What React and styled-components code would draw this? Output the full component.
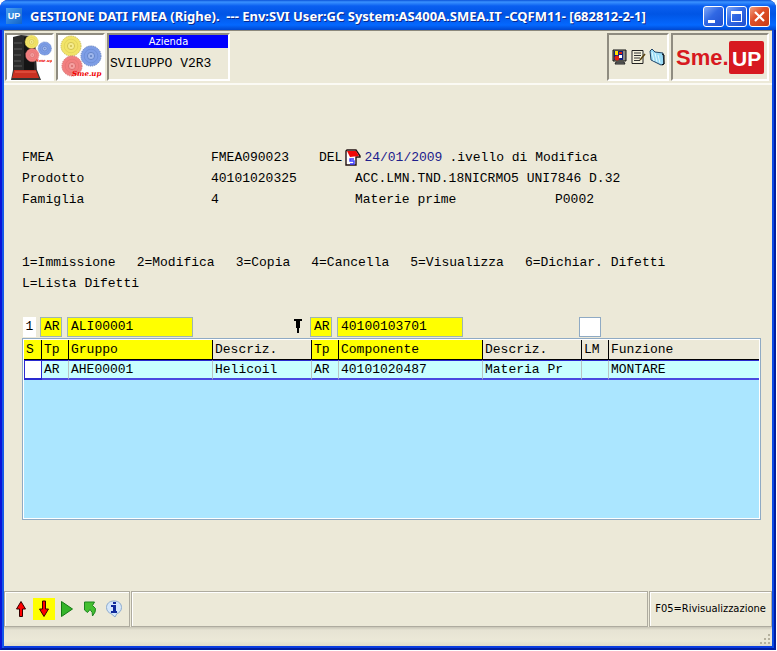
import React from "react";
import styled, { createGlobalStyle, css } from "styled-components";

const mono = `"Liberation Mono", "Courier New", monospace`;
const ui = `"DejaVu Sans Condensed", "DejaVu Sans", Tahoma, sans-serif`;

const GlobalStyle = createGlobalStyle`
  *, *::before, *::after { box-sizing: border-box; }
  body { margin: 0; background: #fff; color: #000; font: 13px/21px ${mono}; }
  button, input { font: inherit; color: inherit; margin: 0; padding: 0; border: 0; border-radius: 0; background: none; }
`;

const Window = styled.div`
  min-height: calc(100vh - 1px);
  margin: 0 1px 1px 0;
  display: flex;
  flex-direction: column;
  padding: 0 2px 2px;
  border: 2px solid;
  border-top: 0;
  border-color: #0a14d8 #001ea0 #001ea0 #0a14d8;
  border-radius: 8px 8px 0 0;
  background: #ece9d8;
  box-shadow: inset 2px 0 0 #1458e8, inset -2px 0 0 #0a4ae4, inset 0 -2px 0 #0a3ce0;
`;

const TitleBar = styled.header`
  display: flex;
  align-items: center;
  height: 30px;
  margin: 0 -4px;
  padding: 2px 6px 0;
  border-radius: 8px 8px 0 0;
  background: linear-gradient(#0a52d8, #3a92ff 2px, #0a5ff0 6px, #0055e5 14px, #0468ff 25px, #0048d0 30px);
`;

const AppBadge = styled.span`
  width: 16px;
  height: 16px;
  background: linear-gradient(135deg, #4aa0f0, #1263c8);
  color: #fff;
  font: bold 9px/16px "Liberation Sans", sans-serif;
  text-align: center;
`;

const Title = styled.h1`
  flex: 1;
  margin: 0 0 0 8px;
  color: #fff;
  font: bold 13px/20px "Noto Sans", sans-serif;
  white-space: pre;
  text-shadow: 1px 1px 0 #0a2a90;
`;

const WindowButtons = styled.div`
  display: flex;
  gap: 2px;
`;

const WindowButton = styled.button`
  display: flex;
  width: 21px;
  height: 21px;
  border: 1px solid #fff;
  border-radius: 3px;
  background: ${(p) => (p.$close ? "linear-gradient(135deg, #f0a080, #e0502a 40%, #c83c14)" : "linear-gradient(135deg, #7fa8f8, #3068e4 45%, #2050d0)")};
`;

const TopBar = styled.div`
  display: flex;
  gap: 2px;
  height: 55px;
  padding: 2px 3px 2px 1px;
  border-top: 1px solid #8c897c;
  border-bottom: 2px solid #fbfaf4;
`;

const TopPanel = styled.div`
  display: flex;
  align-items: center;
  justify-content: center;
  width: ${(p) => p.$width}px;
  border: 2px solid;
  border-color: #8f8c80 #fff #fff #8f8c80;
  background: ${(p) => (p.$white ? "#fff" : "#ece9d8")};
`;

const Spacer = styled.div`
  flex: 1;
`;

const Company = styled(TopPanel)`
  flex-direction: column;
  align-items: stretch;
  justify-content: flex-start;
`;

const CompanyLabel = styled.div`
  background: #0000ff;
  color: #fff;
  font: 11px/13px ${ui};
  text-align: center;
`;

const CompanyValue = styled.div`
  padding: 5px 1px;
`;

const IconButton = styled.button`
  display: flex;
  align-items: center;
  justify-content: center;
  width: ${(p) => p.$width || 19}px;
  height: 22px;
  background: ${(p) => (p.$active ? "#ffff00" : "transparent")};
`;

const Main = styled.main`
  flex: 1;
  padding: 62px 11px 70px 18px;
`;

const Details = styled.div`
  display: grid;
  grid-template-columns: 189px 108px 36px 200px 1fr;
  grid-auto-rows: 21px;
  white-space: pre;
`;

const Cell = styled.span`
  grid-column: ${(p) => p.$col};
`;

const DateLine = styled.label`
  grid-column: 3 / -1;
  display: flex;
  align-items: center;
`;

const CalendarSlot = styled.span`
  display: flex;
  margin: 0 3px 0 2px;
`;

const DateInput = styled.input`
  width: 85px;
  height: 19px;
  color: #20208c;
`;

const Legend = styled.div`
  margin: 42px 0 22px;
  display: flex;
  flex-wrap: wrap;
  column-gap: 21px;
  padding-right: 60px;
`;

const Filters = styled.div`
  display: flex;
  align-items: center;
  height: 21px;
  margin-bottom: 1px;
`;

const FilterInput = styled.input`
  flex: none;
  width: ${(p) => p.$width}px;
  height: 20px;
  margin-left: ${(p) => p.$gap || 0}px;
  padding-left: 3px;
  border: 1px solid ${(p) => (p.$plain ? "#8faac4" : "#9db4b4")};
  background: ${(p) => (p.$plain ? "#fff" : "#ffff00")};
`;

const RowCount = styled.span`
  width: 13px;
  height: 20px;
  margin-left: 1px;
  background: #fff;
  line-height: 20px;
  text-align: center;
`;

const PinSlot = styled.span`
  display: flex;
  width: 8px;
  margin: 0 8px 0 101px;
`;

const GridBox = styled.div`
  height: 182px;
  padding: 1px;
  border: 1px solid #8faac4;
  background: #abe6ff;
  box-shadow: inset 0 0 0 1px #fff;
`;

const Table = styled.table`
  width: 100%;
  table-layout: fixed;
  border-collapse: separate;
  border-spacing: 0;
  line-height: 17px;
  white-space: nowrap;
`;

const Col = styled.col`
  width: ${(p) => (p.$width ? `${p.$width}px` : "auto")};
`;

const Th = styled.th`
  height: 20px;
  padding: 0 2px;
  border-right: 1px solid #000;
  border-bottom: 1px solid #000;
  background: ${(p) => (p.$key ? "#ffff00" : "#ece9d8")};
  font-weight: normal;
  text-align: left;
  &:last-child { border-right: 0; }
`;

const Td = styled.td`
  height: 19px;
  padding: 0 2px;
  border-right: 1px solid #b8c4c4;
  border-top: 1px solid #2a2ad0;
  border-bottom: 2px solid #4a4ae0;
  background: #c8ffff;
  &:first-child { background: #fff; border: 1px solid #2a2ad0; border-bottom-width: 2px; padding: 0; }
  &:last-child { border-right: 0; }
`;

const SelectInput = styled.input`
  display: block;
  width: 100%;
  height: 15px;
`;

const BottomBar = styled.footer`
  display: flex;
  gap: 1px;
  height: 36px;
`;

const BottomPanel = styled.div`
  display: flex;
  align-items: center;
  border: 1px solid #aeab9f;
  box-shadow: inset 1px 1px 0 #fff;
  ${(p) => (p.$width ? css`width: ${p.$width}px;` : css`flex: 1;`)}
  padding-left: ${(p) => p.$pad || 0}px;
`;

const FunctionKey = styled.button`
  flex: 1;
  height: 100%;
  font: 11px/14px ${ui};
  white-space: nowrap;
`;

const StatusBar = styled.div`
  display: flex;
  justify-content: flex-end;
  align-items: flex-end;
  height: 19px;
  background: linear-gradient(#c8c5b6, #e6e3d3 3px, #ece9d8 14px, #dedbca);
`;

function Gear({ x, y, r, fill, stroke }) {
  return (
    <g transform={`translate(${x} ${y})`}>
      <circle r={r} fill={fill} stroke={stroke} strokeWidth="1" strokeDasharray="1.4 .8" />
      <circle r={r * 0.68} fill="none" stroke={stroke} strokeWidth=".6" opacity=".6" />
      <circle r={r * 0.36} fill="#fff" fillOpacity=".25" stroke={stroke} strokeWidth=".8" />
      <circle r="1" fill={stroke} />
    </g>
  );
}

function Gears() {
  return (
    <>
      <Gear x={13} y={12} r={10} fill="#f2e468" stroke="#cbbb48" />
      <Gear x={33} y={22} r={10} fill="#7e9ee6" stroke="#5b7cc0" />
      <Gear x={14} y={32} r={10} fill="#f28080" stroke="#d46a6a" />
    </>
  );
}

function ServerPicture() {
  return (
    <svg width="45" height="46" viewBox="0 0 45 46" aria-hidden="true">
      <path d="M6 3 14 1 24 2 28 5 30 38H6Z" fill="#2b2b2b" />
      <path d="M17 3h10v34H17z" fill="#141414" />
      <path d="M7 9h8M7 15h8M7 21h7M7 27h7M7 32h8" stroke="#5c5c5c" />
      <path d="M6 36 4 46H34L30 36Z" fill="#333" />
      <path d="M7 36H29L32 44H5Z" fill="#c93022" />
      <path d="M8 38H29" stroke="#ef6550" />
      <g transform="translate(16 0) scale(.66)">
        <Gears />
      </g>
      <text x="29" y="28" fill="#e00" fontFamily="DejaVu Serif, serif" fontWeight="bold" fontStyle="italic" fontSize="4">Sme.up</text>
    </svg>
  );
}

function GearsPicture() {
  return (
    <svg width="45" height="46" viewBox="0 0 45 46" aria-hidden="true">
      <Gears />
      <text x="14" y="42" fill="#f00000" fontFamily="DejaVu Serif, serif" fontWeight="bold" fontStyle="italic" fontSize="7">Sme.up</text>
    </svg>
  );
}

function Logo() {
  return (
    <svg width="90" height="36" viewBox="0 0 90 36" role="img" aria-label="Sme.UP">
      <rect x="54" y="2" width="35" height="33" rx="2" fill="#d71920" />
      <text x="1" y="26" fill="#d71920" fontFamily="Liberation Sans, sans-serif" fontWeight="bold" fontSize="22">Sme.</text>
      <text x="57" y="27" fill="#fff" fontFamily="Liberation Sans, sans-serif" fontWeight="bold" fontSize="21">UP</text>
    </svg>
  );
}

function MonitorIcon() {
  return (
    <svg width="15" height="16" viewBox="0 0 15 16">
      <path d="M1 1h13v11H1z" fill="#8c8c80" stroke="#111" />
      <path d="M2 2h9v9H2z" fill="#102080" />
      <path d="M3 2h3v4H3z" fill="#ffe000" />
      <circle cx="5" cy="9" r="2.5" fill="#e02010" />
      <path d="M7 3h3v2H7z" fill="#e02010" />
      <path d="M7 6h3v3H7z" fill="#fff" />
      <path d="M4 13h8l1 2H3z" fill="#777" stroke="#222" />
    </svg>
  );
}

function NoteIcon() {
  return (
    <svg width="15" height="16" viewBox="0 0 15 16">
      <path d="M1 1.500H12V14.500H1Z" fill="#f4f1dc" stroke="#222" />
      <path d="M3 4h7M3 6.500h7M3 9h6M3 11.500h6" stroke="#333" />
      <path d="M9 11 14 5" stroke="#5a4410" strokeWidth="1.600" />
    </svg>
  );
}

function FolderIcon() {
  return (
    <svg width="17" height="18" viewBox="0 0 17 18">
      <path d="M1 3 3 1 6 4 14 5 15 16 12 17 2 12Z" fill="#9adcf6" stroke="#246" />
      <path d="M3 4 5 13M6 5 8 14M9 7 11 15" stroke="#e4faff" />
      <path d="M13 6 15 7V16L13 17" stroke="#000" fill="none" />
    </svg>
  );
}

function CalendarIcon() {
  return (
    <svg width="17" height="18" viewBox="0 0 17 18">
      <path d="M2 2 3 1H12L16 7V8H12V16H2Z" fill="#fff" stroke="#221010" strokeWidth="1.400" />
      <path d="M3 2H12L15 7 6 8Z" fill="#f00808" />
      <path d="M10 10H6V12H10V15H6" fill="none" stroke="#3636ff" strokeWidth="1.400" />
    </svg>
  );
}

function PinIcon() {
  return (
    <svg width="8" height="18" viewBox="0 0 8 18">
      <path d="M0 1H8V3H6V10H5V15H3V10H2V3H0Z" fill="#000" />
    </svg>
  );
}

function ArrowIcon({ down }) {
  return (
    <svg width="12" height="18" viewBox="0 0 12 18">
      <path d={down ? "M4.500 1H7.500V9H10.500L6 16.500 1.500 9H4.500Z" : "M4.500 16.500H7.500V9H10.500L6 1.500 1.500 9H4.500Z"} fill="#f00" stroke="#300" />
    </svg>
  );
}

function PlayIcon() {
  return (
    <svg width="14" height="18" viewBox="0 0 14 18">
      <path d="M1.500 1.500 12.500 9 1.500 16.500Z" fill="#35b52a" stroke="#137a13" />
    </svg>
  );
}

function ReturnIcon() {
  return (
    <svg width="14" height="18" viewBox="0 0 14 18">
      <path d="M1.500 2H11.500L9.500 5.500 12.500 8.500Q13 12 9.500 16Q10 12 7 9.500L4.500 12.500 1.500 10Z" fill="#44c030" stroke="#1c8420" />
    </svg>
  );
}

function InfoIcon() {
  return (
    <svg width="18" height="18" viewBox="0 0 18 18">
      <path d="M9 1C14 1 16.500 4 16.500 7.500S14 13 12 13.500L10 17 6 13.500C4 13 1.500 11 1.500 7.500S4 1 9 1Z" fill="#d4e6fa" stroke="#8cabcf" />
      <path d="M8 2h3v2H8zM6 5h5v6h1v2H6v-2h2V7H6z" fill="#102a9c" />
    </svg>
  );
}

function GripIcon() {
  return (
    <svg width="13" height="13" viewBox="0 0 13 13" aria-hidden="true">
      <path d="M9 1h2v2H9zM5 5h2v2H5zM9 5h2v2H9zM1 9h2v2H1zM5 9h2v2H5zM9 9h2v2H9z" fill="#b5b19e" />
    </svg>
  );
}

const commands = ["1=Immissione", "2=Modifica", "3=Copia", "4=Cancella", "5=Visualizza", "6=Dichiar. Difetti", "L=Lista Difetti"];

const columns = [
  { name: "S", width: 18, key: true },
  { name: "Tp", width: 27, key: true, value: "AR" },
  { name: "Gruppo", width: 144, key: true, value: "AHE00001" },
  { name: "Descriz.", width: 99, value: "Helicoil" },
  { name: "Tp", width: 27, key: true, value: "AR" },
  { name: "Componente", width: 144, key: true, value: "40101020487" },
  { name: "Descriz.", width: 99, value: "Materia Pr" },
  { name: "LM", width: 27, value: "" },
  { name: "Funzione", value: "MONTARE" },
];

export default function App() {
  return (
    <>
      <GlobalStyle />
      <Window>
        <TitleBar>
          <AppBadge>UP</AppBadge>
          <Title>{"GESTIONE DATI FMEA (Righe).  --- Env:SVI User:GC System:AS400A.SMEA.IT -CQFM11- [682812-2-1]"}</Title>
          <WindowButtons>
            <WindowButton aria-label="Minimize">
              <svg width="19" height="19"><path d="M4 13h7v3H4z" fill="#fff" /></svg>
            </WindowButton>
            <WindowButton aria-label="Maximize">
              <svg width="19" height="19"><path d="M4 4h11v11H4zM5 7v7h9V7z" fill="#fff" fillRule="evenodd" /></svg>
            </WindowButton>
            <WindowButton $close aria-label="Close">
              <svg width="19" height="19"><path d="M5 5 14 14M14 5 5 14" stroke="#fff" strokeWidth="2.200" /></svg>
            </WindowButton>
          </WindowButtons>
        </TitleBar>

        <TopBar>
          <TopPanel $width={49} $white><ServerPicture /></TopPanel>
          <TopPanel $width={49} $white><GearsPicture /></TopPanel>
          <Company $width={123}>
            <CompanyLabel>Azienda</CompanyLabel>
            <CompanyValue>SVILUPPO V2R3</CompanyValue>
          </Company>
          <Spacer />
          <TopPanel $width={62}>
            <IconButton aria-label="Monitor"><MonitorIcon /></IconButton>
            <IconButton aria-label="Note"><NoteIcon /></IconButton>
            <IconButton aria-label="Folder"><FolderIcon /></IconButton>
          </TopPanel>
          <TopPanel $width={98}><Logo /></TopPanel>
        </TopBar>

        <Main>
          <Details>
            <Cell $col={1}>FMEA</Cell>
            <Cell $col={2}>FMEA090023</Cell>
            <DateLine>
              DEL
              <CalendarSlot><CalendarIcon /></CalendarSlot>
              <DateInput defaultValue="24/01/2009" />
              .ivello di Modifica
            </DateLine>
            <Cell $col={1}>Prodotto</Cell>
            <Cell $col={2}>40101020325</Cell>
            <Cell $col="4 / -1">ACC.LMN.TND.18NICRMO5 UNI7846 D.32</Cell>
            <Cell $col={1}>Famiglia</Cell>
            <Cell $col={2}>4</Cell>
            <Cell $col={4}>Materie prime</Cell>
            <Cell $col={5}>P0002</Cell>
          </Details>

          <Legend>
            {commands.map((c) => <span key={c}>{c}</span>)}
          </Legend>

          <Filters>
            <RowCount>1</RowCount>
            <FilterInput $width={22} $gap={4} defaultValue="AR" aria-label="Tp gruppo" />
            <FilterInput $width={126} $gap={5} defaultValue="ALI00001" aria-label="Gruppo" />
            <PinSlot><PinIcon /></PinSlot>
            <FilterInput $width={22} defaultValue="AR" aria-label="Tp componente" />
            <FilterInput $width={126} $gap={5} defaultValue="40100103701" aria-label="Componente" />
            <FilterInput $width={22} $gap={116} $plain aria-label="LM" />
          </Filters>

          <GridBox>
            <Table>
              <colgroup>{columns.map((c, i) => <Col key={i} $width={c.width} />)}</colgroup>
              <thead>
                <tr>{columns.map((c, i) => <Th key={i} $key={c.key}>{c.name}</Th>)}</tr>
              </thead>
              <tbody>
                <tr>
                  {columns.map((c, i) => (
                    <Td key={i}>{i === 0 ? <SelectInput aria-label="S" /> : c.value}</Td>
                  ))}
                </tr>
              </tbody>
            </Table>
          </GridBox>
        </Main>

        <BottomBar>
          <BottomPanel $width={126} $pad={4}>
            <IconButton $width={24} aria-label="Up"><ArrowIcon /></IconButton>
            <IconButton $width={22} $active aria-label="Down"><ArrowIcon down /></IconButton>
            <IconButton $width={24} aria-label="Run"><PlayIcon /></IconButton>
            <IconButton $width={22} aria-label="Return"><ReturnIcon /></IconButton>
            <IconButton $width={25} aria-label="Info"><InfoIcon /></IconButton>
          </BottomPanel>
          <BottomPanel />
          <BottomPanel $width={123}>
            <FunctionKey>F05=Rivisualizzazione</FunctionKey>
          </BottomPanel>
        </BottomBar>
        <StatusBar><GripIcon /></StatusBar>
      </Window>
    </>
  );
}
